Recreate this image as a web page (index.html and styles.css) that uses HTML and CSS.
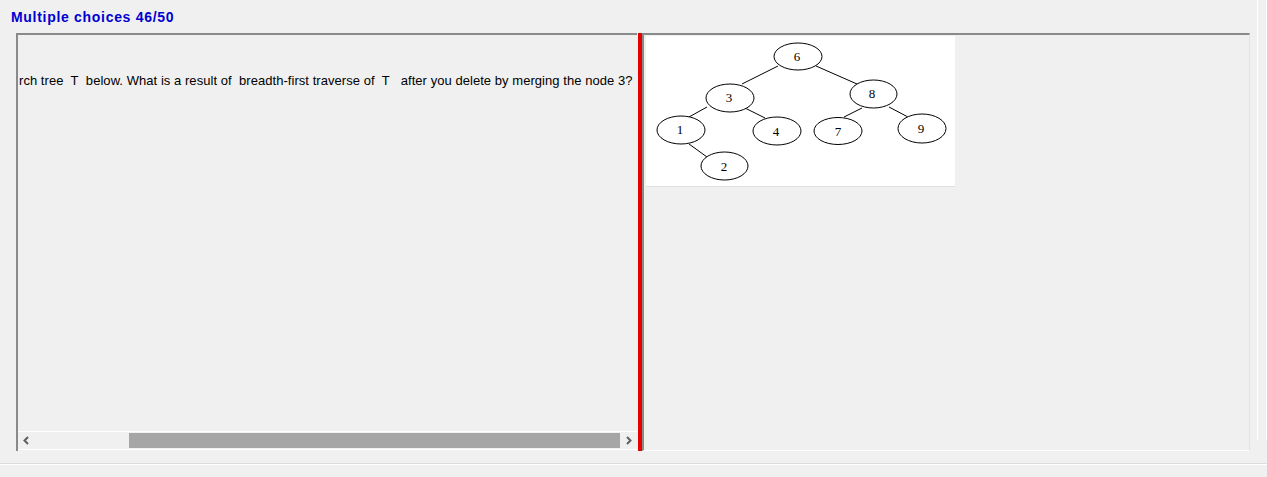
FILE: index.html
```html
<!DOCTYPE html>
<html>
<head>
<meta charset="utf-8">
<link rel="stylesheet" href="styles.css">
</head>
<body>
<div class="window">
  <div class="title">Multiple choices 46/50</div>
  <div class="split">
    <div class="left">
      <div class="question">
        <p class="qtext">rch tree&nbsp; T&nbsp; below. What is a result of&nbsp; breadth-first traverse of&nbsp; T&nbsp;&nbsp; after you delete by merging the node 3?</p>
      </div>
      <div class="hscroll">
        <span class="arrow"><svg width="17" height="15" viewBox="0 0 17 15"><path d="M10 4 L6.5 7.5 L10 11" fill="none" stroke="#606060" stroke-width="2"/></svg></span>
        <div class="track"><div class="thumb"></div></div>
        <span class="arrow"><svg width="17" height="15" viewBox="0 0 17 15"><path d="M7 4 L10.5 7.5 L7 11" fill="none" stroke="#606060" stroke-width="2"/></svg></span>
      </div>
    </div>
    <div class="divider"></div>
    <div class="right">
      <div class="figure">
        <svg width="309" height="150" viewBox="0 0 309 150" xmlns="http://www.w3.org/2000/svg">
          <g stroke="#000" stroke-width="1" fill="none">
            <line x1="132" y1="30" x2="96" y2="48"/>
            <line x1="170" y1="30" x2="211" y2="48"/>
            <line x1="61" y1="71" x2="43" y2="81"/>
            <line x1="99" y1="72" x2="119" y2="82"/>
            <line x1="216" y1="72" x2="198" y2="81"/>
            <line x1="243" y1="71" x2="262" y2="81"/>
            <line x1="43" y1="108" x2="61" y2="121"/>
          </g>
          <g stroke="#000" stroke-width="1" fill="#fff">
            <ellipse cx="152" cy="20.5" rx="24" ry="13.5"/>
            <ellipse cx="84" cy="62" rx="24" ry="14"/>
            <ellipse cx="227.5" cy="58" rx="23.5" ry="14"/>
            <ellipse cx="35" cy="94" rx="24" ry="14"/>
            <ellipse cx="131" cy="95" rx="24" ry="14"/>
            <ellipse cx="192" cy="95" rx="24" ry="13.5"/>
            <ellipse cx="276" cy="92.5" rx="24" ry="14.5"/>
            <ellipse cx="78.5" cy="130" rx="23.5" ry="14"/>
          </g>
          <g class="lbl" text-anchor="middle">
            <text x="151" y="25">6</text>
            <text x="83" y="66">3</text>
            <text x="226" y="62">8</text>
            <text x="34" y="98">1</text>
            <text x="130" y="100">4</text>
            <text x="192" y="100">7</text>
            <text x="275" y="97">9</text>
            <text x="78" y="135">2</text>
          </g>
        </svg>
      </div>
    </div>
    <div class="edge"></div>
  </div>
  <div class="statusbar"></div>
</div>
</body>
</html>
```
FILE: styles.css
```css
html, body {
  margin: 0;
  padding: 0;
  background: #f0f0f0;
  width: 1267px;
  height: 477px;
  overflow: hidden;
  font-family: "Liberation Sans", Arial, sans-serif;
}
.window {
  display: flex;
  flex-direction: column;
  height: 477px;
}
.title {
  height: 33px;
  box-sizing: border-box;
  padding: 9px 0 0 11px;
  font-size: 14px;
  letter-spacing: 0.7px;
  font-weight: bold;
  color: #0000d0;
  line-height: 16px;
}
.split {
  display: flex;
  margin-left: 16px;
  height: 418px;
}
.left {
  width: 622px;
  display: flex;
  flex-direction: column;
  border-top: 2px solid #8a8a8a;
  border-left: 2px solid #8a8a8a;
  box-sizing: border-box;
}
.question {
  flex: 1;
  overflow: hidden;
}
.qtext {
  margin: 38px 0 0 1px;
  white-space: nowrap;
  font-size: 13px;
  letter-spacing: 0.05px;
  color: #000;
}
.hscroll {
  height: 17px;
  display: flex;
  align-items: center;
  border-top: 1px solid #fff;
  border-bottom: 1px solid #fff;
  margin-bottom: 1px;
  background: #f0f0f0;
}
.arrow {
  width: 17px;
  height: 15px;
}
.arrow svg {
  display: block;
}
.track {
  flex: 1;
  height: 15px;
  display: flex;
  justify-content: flex-end;
}
.thumb {
  width: 491px;
  height: 15px;
  background: #a6a6a6;
}
.divider {
  width: 4px;
  background: #e60000;
  margin-left: 1px;
  height: 418px;
}
.right {
  width: 609px;
  box-sizing: border-box;
  border-top: 2px solid #8a8a8a;
  border-left: 2px solid #8a8a8a;
  border-bottom: 1px solid #fff;
  border-right: 1px solid #e3e3e3;
  padding: 1px 0 0 2px;
}
.figure {
  width: 309px;
  height: 150px;
  background: #fff;
  border-bottom: 1px solid #e0e0e0;
}
.figure svg {
  display: block;
}
.lbl text {
  font-family: "Liberation Serif", "Times New Roman", serif;
  font-size: 13px;
  fill: #000;
}
.edge {
  width: 8px;
  margin-left: 7px;
  border-left: 1px solid #fff;
  border-right: 1px solid #fff;
  height: 440px;
  margin-top: -33px;
}
.statusbar {
  margin-top: 12px;
  border-top: 1px solid #dcdcdc;
  border-bottom: 1px solid #fff;
  height: 0;
  flex: none;
}
```
